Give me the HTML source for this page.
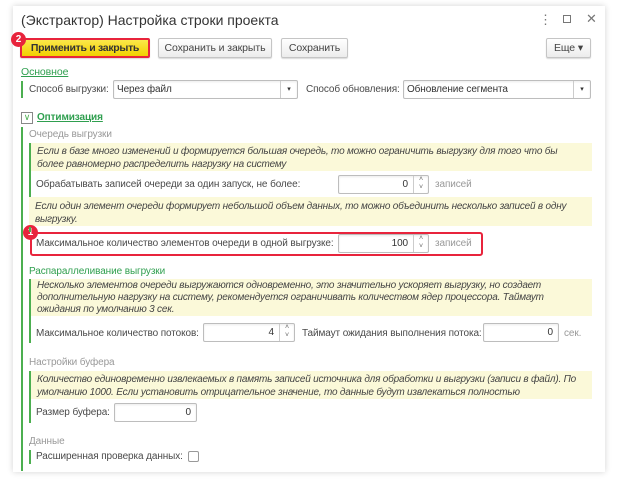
<!DOCTYPE html>
<html><head><meta charset="utf-8"><style>
*{box-sizing:border-box;margin:0;padding:0}
body{width:624px;height:479px;background:#fff;font-family:"Liberation Sans",Arial,sans-serif;font-size:10px;letter-spacing:-0.1px;color:#4a4a4a;position:relative;overflow:hidden}
.win{position:absolute;left:13px;top:6px;width:592px;height:466px;background:#fff;box-shadow:0 0 6px rgba(0,0,0,.18)}
.a{position:absolute;white-space:nowrap}
.title{left:21px;top:12px;font-size:14px;letter-spacing:0;color:#333}
.btn{position:absolute;top:38px;height:20px;border:1px solid #c5c5c5;border-radius:2px;background:linear-gradient(#fff,#ececec);color:#444;text-align:center;line-height:18px;box-shadow:0 1px 1px rgba(0,0,0,.15);font-size:10.5px}
.inp{position:absolute;height:19px;border:1px solid #bdbdbd;border-radius:2px;background:#fff;box-shadow:inset 0 1px 2px rgba(0,0,0,.08);line-height:17px;color:#333}
.num{text-align:right;padding-right:5px}
.spin{position:absolute;right:0;top:0;width:15px;height:17px;border-left:1px solid #ccc;font-size:7px;text-align:center;line-height:8px;color:#666}
.note{position:absolute;left:29px;width:563px;background:#fbf9d9;border-left:2px solid #4caf50;padding:2px 0 0 6px;font-style:italic;color:#444;line-height:13px;white-space:nowrap;letter-spacing:-0.2px;overflow:hidden}
.gl{position:absolute;width:2px;background:#4caf50}
.grey{color:#999}
.green{color:#2f9f4f}
.dd{position:absolute;right:0;top:0;width:17px;height:17px;border-left:1px solid #ccc;text-align:center;font-size:7px;line-height:17px}
.badge{position:absolute;width:15px;height:15px;border-radius:50%;background:#e8243c;color:#fff;font-weight:bold;font-size:10px;text-align:center;line-height:15px}
</style></head><body>
<div class="win"></div>
<div class="a title">(Экстрактор) Настройка строки проекта</div>
<div class="a" style="left:539px;top:12px;font-size:13px;color:#777">⋮</div>
<div class="a" style="left:563px;top:15px;width:8px;height:8px;border:1px solid #777"></div>
<div class="a" style="left:586px;top:11px;font-size:13px;color:#777">✕</div>

<div class="btn" style="left:20px;width:130px;background:linear-gradient(#fbe84a,#f2d000);border:2px solid #e8243c;color:#333;line-height:16px;font-weight:bold;letter-spacing:-0.3px">Применить и закрыть</div>
<div class="badge" style="left:11px;top:32px">2</div>
<div class="btn" style="left:158px;width:114px">Сохранить и закрыть</div>
<div class="btn" style="left:281px;width:67px">Сохранить</div>
<div class="btn" style="left:546px;width:45px">Еще ▾</div>

<div class="a green" style="left:21px;top:66px;text-decoration:underline;font-size:10.5px">Основное</div>
<div class="gl" style="left:21px;top:81px;height:17px"></div>
<div class="a" style="left:29px;top:84px">Способ выгрузки:</div>
<div class="inp" style="left:113px;top:80px;width:185px;padding-left:3px">Через файл<div class="dd">▾</div></div>
<div class="a" style="left:306px;top:84px">Способ обновления:</div>
<div class="inp" style="left:403px;top:80px;width:188px;padding-left:3px">Обновление сегмента<div class="dd">▾</div></div>

<div class="a" style="left:21px;top:112px;width:12px;height:12px;border:1px solid #888;font-size:9px;line-height:9px;text-align:center;color:#4caf50">∨</div>
<div class="a green" style="left:37px;top:112px;text-decoration:underline;font-weight:bold">Оптимизация</div>
<div class="gl" style="left:21px;top:127px;height:344px"></div>

<div class="a grey" style="left:29px;top:129px">Очередь выгрузки</div>
<div class="note" style="top:143px;height:28px">Если в базе много изменений и формируется большая очередь, то можно ограничить выгрузку для того что бы<br>более равномерно распределить нагрузку на систему</div>
<div class="gl" style="left:29px;top:171px;height:56px"></div>
<div class="a" style="left:36px;top:179px">Обрабатывать записей очереди за один запуск, не более:</div>
<div class="inp num" style="left:338px;top:175px;width:91px;padding-right:20px">0<div class="spin">˄<br>˅</div></div>
<div class="a grey" style="left:435px;top:179px">записей</div>
<div class="note" style="top:197px;height:29px;border-left:none;padding-top:3px">Если один элемент очереди формирует небольшой объем данных, то можно объединить несколько записей в одну<br>выгрузку.</div>

<div class="a" style="left:30px;top:232px;width:453px;height:24px;border:2px solid #e8243c;border-radius:3px"></div>
<div class="badge" style="left:23px;top:225px">1</div>
<div class="gl" style="left:29px;top:227px;height:5px"></div>
<div class="a" style="left:36px;top:238px">Максимальное количество элементов очереди в одной выгрузке:</div>
<div class="inp num" style="left:338px;top:234px;width:91px;padding-right:20px">100<div class="spin">˄<br>˅</div></div>
<div class="a grey" style="left:435px;top:238px">записей</div>

<div class="a green" style="left:29px;top:266px">Распараллеливание выгрузки</div>
<div class="note" style="top:279px;height:37px;padding-top:1px;line-height:12px;overflow:visible">Несколько элементов очереди выгружаются одновременно, это значительно ускоряет выгрузку, но создает<br>дополнительную нагрузку на систему, рекомендуется ограничивать количеством ядер процессора. Таймаут<br>ожидания по умолчанию 3 сек.</div>
<div class="gl" style="left:29px;top:316px;height:27px"></div>
<div class="a" style="left:36px;top:328px">Максимальное количество потоков:</div>
<div class="inp num" style="left:203px;top:323px;width:92px;padding-right:20px">4<div class="spin">˄<br>˅</div></div>
<div class="a" style="left:302px;top:328px">Таймаут ожидания выполнения потока:</div>
<div class="inp num" style="left:483px;top:323px;width:76px">0</div>
<div class="a grey" style="left:564px;top:328px">сек.</div>

<div class="a grey" style="left:29px;top:357px">Настройки буфера</div>
<div class="note" style="top:371px;height:28px">Количество единовременно извлекаемых в память записей источника для обработки и выгрузки (записи в файл). По<br>умолчанию 1000. Если установить отрицательное значение, то данные будут извлекаться полностью</div>
<div class="gl" style="left:29px;top:399px;height:24px"></div>
<div class="a" style="left:36px;top:407px">Размер буфера:</div>
<div class="inp num" style="left:114px;top:403px;width:83px">0</div>

<div class="a grey" style="left:29px;top:436px">Данные</div>
<div class="gl" style="left:29px;top:450px;height:14px"></div>
<div class="a" style="left:36px;top:451px">Расширенная проверка данных:</div>
<div class="a" style="left:188px;top:451px;width:11px;height:11px;border:1px solid #999;border-radius:2px"></div>
</body></html>
